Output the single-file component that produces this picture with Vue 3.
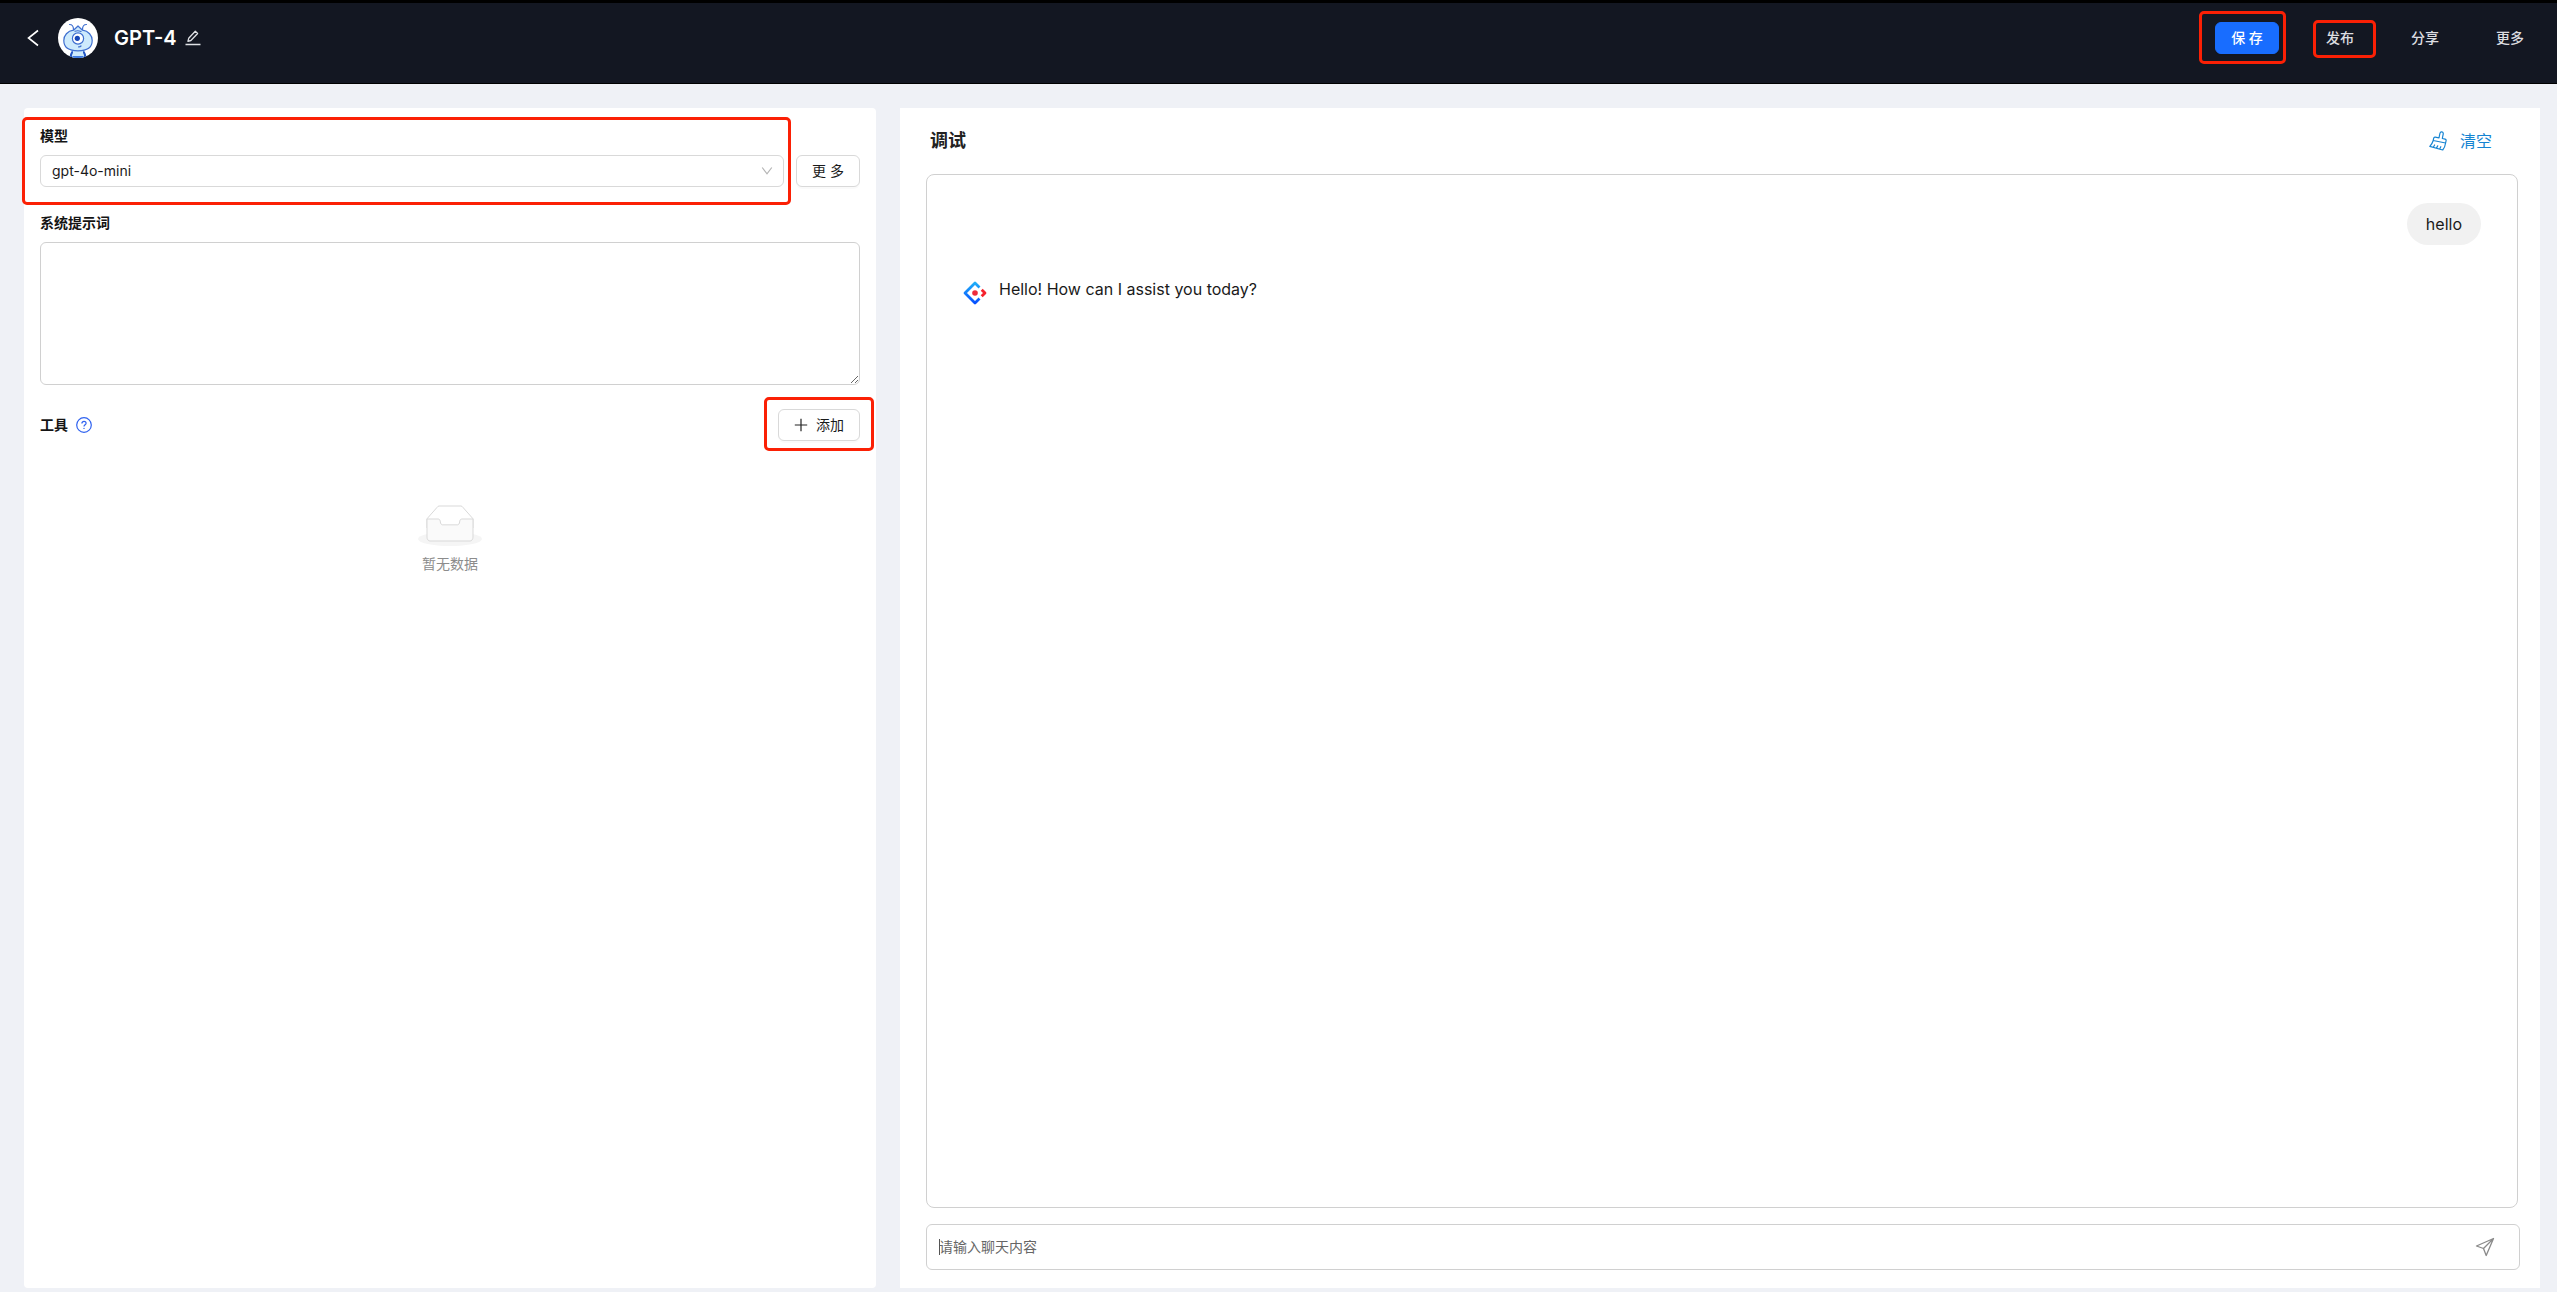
<script setup>
import { ref } from 'vue'

const model = ref('gpt-4o-mini')
const prompt = ref('')
const draft = ref('')
</script>

<template>
  <div class="app">
    <header class="topbar">
      <button class="icon-btn back" aria-label="返回">
        <svg width="12" height="18" viewBox="0 0 12 18" fill="none" stroke="#fff" stroke-width="1.6"><path d="M11 1.5 1.5 9 11 16.5" /></svg>
      </button>
      <svg class="avatar" viewBox="0 0 40 40" aria-hidden="true">
        <defs><clipPath id="avatar-clip"><circle cx="20" cy="20" r="20" /></clipPath></defs>
        <circle cx="20" cy="20" r="20" fill="#fff" />
        <g clip-path="url(#avatar-clip)" stroke="#3f6fd0" stroke-width="1.2" stroke-linecap="round" stroke-linejoin="round">
          <path d="M14 34c0-2 2-2 6-2s6 0 6 2l1 6H13z" fill="#cdeafc" />
          <path d="M14 34.500q-2 3-1 6M26 34.500q2 3 1 6" fill="none" stroke="#2457c5" stroke-width="2" />
          <path d="M14.500 38h11v3h-11z" fill="#3f7be0" stroke="none" />
          <path d="M15.500 12.200l4.500-4.200 4.500 4.200c6 .8 9.700 5.300 9.700 10.300 0 6.500-5.200 10.300-14.200 10.300S5.800 29 5.800 22.500c0-5 3.700-9.500 9.700-10.300z" fill="#cdeafc" />
          <path d="M15.500 11.500C15.500 8 14 6.500 11.500 6.500M24.500 11.500c0-3.500 1.500-5 4-5" fill="none" />
          <circle cx="20" cy="20.500" r="5.600" fill="#fff" />
          <circle cx="19.300" cy="20.300" r="2.600" fill="#1746b8" stroke="none" />
          <path d="M17 13.200q3-1 6 .3M20.500 28.800q1.500.3 2.500-.8" fill="none" />
        </g>
      </svg>
      <h1 class="title">GPT-4</h1>
      <button class="icon-btn" aria-label="编辑名称">
        <svg width="16" height="16" viewBox="0 0 16 16" fill="none" stroke="#dfe1e5" stroke-width="1.3" stroke-linejoin="round"><path d="M10.300 1.200l2.300 2.300-6.700 7-3 .8.800-3zM0.500 14.500h15" /></svg>
      </button>
      <nav class="actions">
        <span class="mark-wrap save-wrap"><button class="btn primary">保 存</button><i class="mark mark-save"></i></span>
        <span class="mark-wrap"><button class="link-btn">发布</button><i class="mark mark-publish"></i></span>
        <button class="link-btn">分享</button>
        <button class="link-btn">更多</button>
      </nav>
    </header>

    <main class="content">
      <section class="panel config">
        <div class="model-row">
          <div class="model-field mark-wrap">
            <label class="label" for="model">模型</label>
            <div class="select-box">
              <select id="model" v-model="model"><option>gpt-4o-mini</option></select>
              <svg class="chevron" width="12" height="12" viewBox="0 0 12 12" fill="none" stroke="#b4b4b4" stroke-width="1.200"><path d="M1.200 2.500 6 8.800l4.800-6.300" /></svg>
            </div>
            <i class="mark mark-model"></i>
          </div>
          <button class="btn more">更 多</button>
        </div>

        <label class="label" for="prompt">系统提示词</label>
        <textarea id="prompt" v-model="prompt"></textarea>

        <div class="tools-row">
          <span class="label">工具</span>
          <svg class="help" width="16" height="16" viewBox="0 0 16 16" fill="none" stroke="#2f62f0" stroke-width="1.200"><circle cx="8" cy="8" r="7.300" /><path d="M5.900 6.400c0-1.300.9-2.100 2.100-2.100s2.100.8 2.100 1.900c0 1.500-2.100 1.500-2.100 3.200" /><circle cx="8" cy="11.400" r=".7" fill="#2f62f0" stroke="none" /></svg>
          <span class="mark-wrap add-wrap">
            <button class="btn add">
              <svg width="14" height="14" viewBox="0 0 14 14" stroke="#222" stroke-width="1.200"><path d="M7 .8v12.400M.8 7h12.400" /></svg>
              添加
            </button>
            <i class="mark mark-add"></i>
          </span>
        </div>

        <div class="empty">
          <svg width="64" height="41" viewBox="0 0 64 41">
            <g transform="translate(0 1)" fill="none" fill-rule="evenodd">
              <ellipse fill="#f5f5f5" cx="32" cy="33" rx="32" ry="7" />
              <g stroke="#d9d9d9">
                <path d="M55 12.760L44.854 1.258C44.367.474 43.656 0 42.907 0H21.093c-.749 0-1.460.474-1.947 1.257L9 12.761V22h46v-9.240z" />
                <path d="M41.613 15.931c0-1.605.994-2.930 2.227-2.931H55v18.137C55 33.260 53.680 35 52.050 35h-40.100C10.320 35 9 33.259 9 31.137V13h11.160c1.233 0 2.227 1.323 2.227 2.928v.022c0 1.605 1.005 2.901 2.237 2.901h14.752c1.232 0 2.237-1.308 2.237-2.913v-.007z" fill="#fafafa" />
              </g>
            </g>
          </svg>
          <p>暂无数据</p>
        </div>
      </section>

      <section class="panel debug">
        <div class="debug-head">
          <h2>调试</h2>
          <button class="clear">
            <svg width="18" height="20" viewBox="0 0 18 20" fill="none" stroke="#1684d2" stroke-width="1.200" stroke-linejoin="round" stroke-linecap="round"><path d="M10 6.800l.9-4.300q.4-1.900 2-1.600t1.300 2.200l-.9 4.400 2.800.7q1.200.3 1 1.400l-.5 2.400L4.200 9.500l.5-2.300q.3-1.300 1.500-1.100zM4.200 9.500Q3.200 13 .8 15.400L13.700 19q2.300-2.700 2.900-7M4.300 16.200l1.300-2.200M7.500 17.100l1.200-2.200M10.700 18l1.100-2.300" /></svg>
            <span>清空</span>
          </button>
        </div>
        <div class="chat">
          <div class="bubble">hello</div>
          <div class="reply">
            <svg width="24" height="24" viewBox="0 0 24 24" fill="none" stroke-width="2.800">
              <defs><linearGradient id="reply-blue" x1="0" y1="0" x2="0" y2="1"><stop offset="0" stop-color="#20adf8" /><stop offset="1" stop-color="#0750ff" /></linearGradient></defs>
              <path d="M16.500 6.500 12 2 2 12l10 10 4.500-4.500" stroke="url(#reply-blue)" stroke-linejoin="round" />
              <path d="M18.700 8.700 22 12l-3.300 3.300" stroke="#f5222d" stroke-linejoin="round" />
              <circle cx="12" cy="12" r="2.800" fill="#ee2b3b" />
            </svg>
            <p>Hello! How can I assist you today?</p>
          </div>
        </div>
        <div class="composer">
          <input v-model="draft" type="text" placeholder="请输入聊天内容" aria-label="聊天内容" />
          <button class="icon-btn" aria-label="发送">
            <svg width="20" height="20" viewBox="0 0 20 20" fill="none" stroke="#8a8a8a" stroke-width="1.300" stroke-linejoin="round"><path d="M18.500 1.500 1.500 9l7 2.500 2.700 7zM18.500 1.500l-10 10" /></svg>
          </button>
        </div>
      </section>
    </main>
  </div>
</template>

<style>
body {
  margin: 0;
}
</style>

<style scoped>
.app {
  min-height: 100vh;
  display: flex;
  flex-direction: column;
  background: #eff1f6;
  color: #1a1a1a;
  font: 14px/22px Inter, "Noto Sans CJK SC", sans-serif;
}
.app *,
.app *::before {
  box-sizing: border-box;
}
h1,
h2,
p {
  margin: 0;
}
button,
input,
select,
textarea {
  font: inherit;
  color: inherit;
}
.topbar {
  display: flex;
  align-items: center;
  height: 84px;
  padding: 0 33px 10px 27px;
  border-top: 3px solid #000;
  border-bottom: 1px solid #000;
  background: #131722;
  color: #fff;
}
.icon-btn {
  display: flex;
  padding: 0;
  border: 0;
  background: none;
}
.avatar {
  width: 40px;
  height: 40px;
  margin-left: 19px;
}
.title {
  margin: 0 8px 0 16px;
  font-size: 20px;
  line-height: 28px;
  font-weight: 600;
}
.actions {
  display: flex;
  align-items: center;
  gap: 57px;
  margin-left: auto;
}
.mark-wrap {
  position: relative;
}
.mark {
  position: absolute;
  border: 3px solid #fb2005;
  border-radius: 5px;
  pointer-events: none;
}
.mark-save {
  inset: -11px -7px -10px -16px;
}
.mark-publish {
  inset: -7px -22px -9px -13px;
}
.mark-model {
  inset: -8px -7px -18px -18px;
}
.mark-add {
  inset: -12px -14px -10px -14px;
}
.save-wrap {
  margin-right: -10px;
}
.btn {
  height: 32px;
  padding: 0 15px;
  border: 1px solid #d9d9d9;
  border-radius: 6px;
  background: #fff;
  box-shadow: 0 2px 0 rgba(0, 0, 0, 0.02);
  line-height: 22px;
  white-space: nowrap;
}
.save-wrap .btn,
.more {
  width: 64px;
}
.primary {
  display: block;
  border-color: #186dff;
  background: #186dff;
  color: #fff;
  font-weight: 500;
}
.link-btn {
  display: block;
  padding: 0;
  border: 0;
  background: none;
  color: #dcdde0;
  font-weight: 500;
}
.content {
  flex: 1;
  display: grid;
  grid-template-columns: minmax(0, 852fr) minmax(0, 1640fr);
  gap: 24px;
  padding: 24px 17px 4px 24px;
}
.panel {
  display: flex;
  flex-direction: column;
  background: #fff;
}
.config {
  padding: 17px 16px;
  border-radius: 4px;
}
.debug {
  padding: 19px 20px 18px 26px;
}
.label {
  display: block;
  font-weight: 600;
  color: #141414;
}
.model-row {
  display: flex;
  align-items: flex-end;
  gap: 12px;
  margin-bottom: 25px;
}
.model-field {
  flex: 1;
}
.select-box {
  position: relative;
  margin-top: 8px;
}
.select-box select {
  display: block;
  width: 100%;
  height: 32px;
  padding: 0 11px;
  appearance: none;
  border: 1px solid #d9d9d9;
  border-radius: 6px;
  background: #fff;
}
.chevron {
  position: absolute;
  top: 10px;
  right: 11px;
  pointer-events: none;
}
textarea {
  display: block;
  width: 100%;
  height: 143px;
  margin: 8px 0 24px;
  padding: 4px 11px;
  border: 1px solid #d0d0d0;
  border-radius: 6px;
}
.tools-row {
  display: flex;
  align-items: center;
}
.help {
  margin-left: 8px;
}
.add-wrap {
  margin-left: auto;
}
.add {
  display: flex;
  align-items: center;
  gap: 8px;
}
.empty {
  margin-top: 64px;
  text-align: center;
  color: #8c8c8c;
}
.empty svg {
  display: block;
  margin: 0 auto 7px;
}
.debug-head {
  display: flex;
  justify-content: space-between;
  align-items: center;
  height: 28px;
  padding: 0 28px 0 4px;
}
.debug-head h2 {
  font-size: 18px;
  line-height: 28px;
  font-weight: 600;
  color: #222;
}
.clear {
  display: flex;
  align-items: center;
  gap: 13px;
  padding: 0;
  border: 0;
  background: none;
  color: #1684d2;
  font-size: 16px;
  line-height: 24px;
}
.chat {
  flex: 1;
  margin: 19px 2px 16px 0;
  padding: 28px 36px;
  border: 1px solid #d0d0d0;
  border-radius: 8px;
  font-size: 16px;
  line-height: 24px;
}
.bubble {
  width: fit-content;
  margin-left: auto;
  padding: 9px 19px;
  border-radius: 21px;
  background: #f1f1f1;
}
.reply {
  display: flex;
  align-items: flex-start;
  gap: 12px;
  margin-top: 32px;
}
.reply svg {
  margin-top: 4px;
}
.composer {
  position: relative;
  display: flex;
  align-items: center;
  height: 46px;
  padding: 0 24px 0 12px;
  border: 1px solid #d0d0d0;
  border-radius: 6px;
}
.composer::before {
  content: "";
  position: absolute;
  left: 12px;
  width: 1px;
  height: 16px;
  background: #555;
}
.composer input {
  flex: 1;
  min-width: 0;
  padding: 0;
  border: 0;
  outline: 0;
  background: none;
}
.composer input::placeholder {
  color: #666;
}
</style>
